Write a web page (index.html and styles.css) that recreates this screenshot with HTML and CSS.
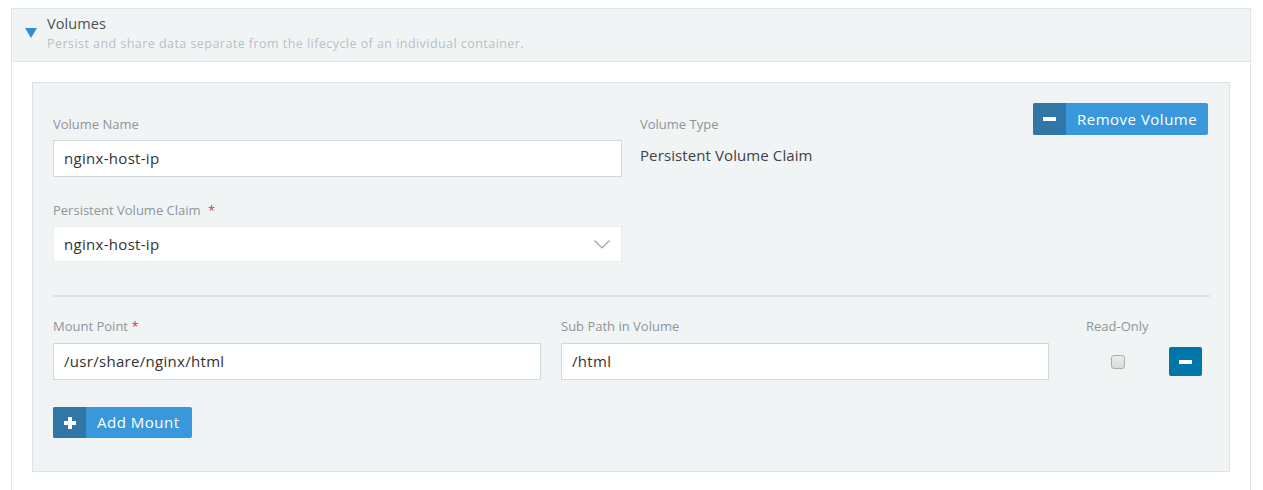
FILE: index.html
```html
<!DOCTYPE html>
<html>
<head>
<meta charset="utf-8">
<link rel="stylesheet" href="styles.css">
</head>
<body>
<div class="section">
  <div class="section-header">
    <span class="caret"></span>
    <div class="header-text">
      <div class="title">Volumes</div>
      <div class="subtitle">Persist and share data separate from the lifecycle of an individual container.</div>
    </div>
  </div>
  <div class="section-body">
    <div class="card">
      <div class="row row-top">
        <div class="col col-name">
          <label class="lbl">Volume Name</label>
          <div class="input">nginx-host-ip</div>
        </div>
        <div class="col col-type">
          <label class="lbl">Volume Type</label>
          <div class="value">Persistent Volume Claim</div>
        </div>
        <button class="btn btn-remove"><span class="btn-icon"><span class="minus"></span></span><span class="btn-text">Remove Volume</span></button>
      </div>
      <div class="row row-claim">
        <div class="col col-name">
          <label class="lbl">Persistent Volume Claim <span class="req req-gap">*</span></label>
          <div class="select">
            <span>nginx-host-ip</span>
            <svg class="chev" width="16" height="9" viewBox="0 0 16 9"><path d="M0.5 0.5 L8 8 L15.5 0.5" fill="none" stroke="#9aa2a8" stroke-width="1.2"/></svg>
          </div>
        </div>
      </div>
      <div class="divider"></div>
      <div class="row row-mount">
        <div class="col col-mount">
          <label class="lbl">Mount Point <span class="req">*</span></label>
          <div class="input">/usr/share/nginx/html</div>
        </div>
        <div class="col col-sub">
          <label class="lbl">Sub Path in Volume</label>
          <div class="input">/html</div>
        </div>
        <div class="col col-ro">
          <label class="lbl">Read-Only</label>
          <div class="ro-box"><span class="checkbox"></span></div>
        </div>
        <div class="col col-del">
          <button class="btn-del"><span class="minus"></span></button>
        </div>
      </div>
      <button class="btn btn-add"><span class="btn-icon"><span class="plus"></span></span><span class="btn-text">Add Mount</span></button>
    </div>
  </div>
</div>
</body>
</html>
```

FILE: styles.css
```css
* { box-sizing: border-box; }
body {
  margin: 0;
  background: #fff;
  font-family: "Open Sans", "Noto Sans", sans-serif;
  color: #333;
}
.section {
  margin: 8px 0 0 11px;
  width: 1240px;
  height: 500px;
  border: 1px solid #dfe5e7;
  border-bottom: none;
}
.section-header {
  height: 53px;
  background: #f1f4f5;
  border-bottom: 1px solid #dfe5e7;
  display: flex;
  padding-left: 13px;
}
.caret {
  width: 0; height: 0;
  border-left: 6px solid transparent;
  border-right: 6px solid transparent;
  border-top: 10px solid #2e8fd8;
  margin-top: 19px;
}
.header-text { margin-left: 10px; padding-top: 4px; }
.title { font-size: 14.5px; line-height: 22px; color: #4a4f53; letter-spacing: 0.1px; }
.subtitle { font-size: 12.5px; line-height: 18px; color: #b8c0c5; letter-spacing: 0.45px; }
.section-body { padding: 20px 20px 0 20px; }
.card {
  width: 1198px;
  height: 390px;
  background: #f1f4f5;
  border: 1px solid #dce3e5;
  padding: 20px 20px 0 20px;
}
.row { display: flex; }
.col { display: flex; flex-direction: column; }
.lbl { font-size: 13px; line-height: 18px; color: #8d959a; margin-bottom: 7px; }
.req { color: #e0343a; }
.req-gap { margin-left: 4px; }
.row-top .col { padding-top: 12px; }
.col-name { width: 569px; }
.col-type { margin-left: 18px; }
.value { font-size: 15px; line-height: 30px; color: #3d4246; letter-spacing: 0.1px; }
.input {
  height: 37px;
  background: #fff;
  border: 1px solid #cfd8dc;
  font-size: 15px;
  line-height: 35px;
  padding-left: 10px;
  color: #333;
  letter-spacing: 0.3px;
}
.btn {
  display: flex;
  border: none;
  padding: 0;
  background: #3898db;
  color: #fff;
  border-radius: 2px;
  font-family: inherit;
  overflow: hidden;
}
.btn-remove { margin-left: auto; margin-right: 1px; height: 32px; width: 175px; }
.btn-icon {
  width: 33px;
  background: #3077a8;
  display: flex;
  align-items: center;
  justify-content: center;
}
.btn-text { font-size: 15px; line-height: 32px; padding-left: 11px; letter-spacing: 0.5px; }
.minus { width: 13px; height: 4px; background: #fff; display: block; }
.plus { width: 12px; height: 12px; position: relative; display: block; }
.plus::before, .plus::after { content: ""; position: absolute; background: #fff; }
.plus::before { left: 0; top: 4px; width: 12px; height: 4px; }
.plus::after { left: 4px; top: 0; width: 4px; height: 12px; }
.row-claim { margin-top: 24px; }
.select {
  height: 36px;
  background: #fff;
  border: 1px solid #e9eef0;
  display: flex;
  align-items: center;
  justify-content: space-between;
  padding: 0 11px 0 10px;
  font-size: 15px;
  letter-spacing: 0.3px;
}
.chev { display: block; }
.divider { height: 2px; background: #dde3e5; margin-top: 33px; margin-right: -1px; }
.row-mount { margin-top: 20px; }
.row-mount .lbl { margin-bottom: 8px; }
.col-mount { width: 488px; }
.col-sub { width: 488px; margin-left: 20px; }
.col-ro { margin-left: 37px; width: 70px; }
.ro-box { height: 37px; display: flex; align-items: center; padding-left: 25px; }
.checkbox {
  width: 14px; height: 14px;
  border: 1px solid #adadad;
  border-radius: 3px;
  background: linear-gradient(#ececec, #dcdcdc);
}
.col-del { margin-left: 13px; padding-top: 30px; }
.btn-del {
  width: 33px; height: 29px;
  border: none; padding: 0;
  background: #0075a8;
  border-radius: 2px;
  display: flex; align-items: center; justify-content: center;
}
.btn-add { margin-top: 27px; height: 31px; width: 139px; }
.btn-add .btn-text { line-height: 31px; padding-left: 11px; }
```
